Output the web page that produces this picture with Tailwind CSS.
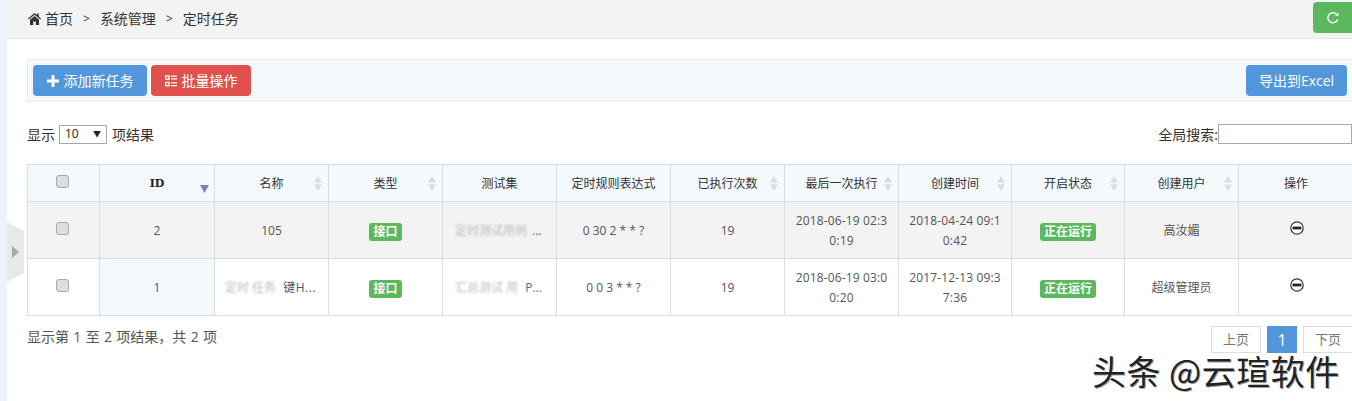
<!doctype html>
<html lang="zh-CN">
  <head>
    <meta charset="UTF-8" />
    <title>定时任务</title>
    <script src="https://cdn.jsdelivr.net/npm/@tailwindcss/browser@4"></script>
  </head>
  <body class="relative flex h-[401px] w-[1352px] overflow-hidden bg-white font-['Open_Sans','Noto_Sans_CJK_SC',sans-serif] text-[14px] text-[#444]">
    <!-- left strip and collapse tab -->
    <aside class="w-[7px] shrink-0 bg-[#eef2f9]"></aside>
    <div class="absolute left-[7px] top-[222px] h-[60px] w-[17px] bg-[#e8e8e8] [clip-path:polygon(0_0,100%_15%,100%_85%,0_100%)]">
      <span class="absolute left-[5px] top-[24px] border-y-[6px] border-l-[7px] border-y-transparent border-l-[#a9a9a9]"></span>
    </div>

    <main class="w-[1345px] shrink-0">
      <!-- breadcrumb -->
      <header class="flex h-[39px] items-start justify-between border-b border-[#e7e7e7] bg-[#f3f3f3]">
        <nav class="flex h-[37px] items-center pl-[21px] text-[#333]">
          <svg class="mr-[4px] h-[12px] w-[13px]" viewBox="0 0 13 12" fill="#333"><path d="M6.5 0 0 5.6l.8.9L6.5 1.7l5.7 4.8.8-.9-2.3-2V.6H9v1.5zM6.5 3 2 6.8V12h3.2V8.4h2.6V12H11V6.8z" /></svg>
          <span>首页</span>
          <span class="mx-[10px] text-[12px]">&gt;</span>
          <span>系统管理</span>
          <span class="mx-[10px] text-[12px]">&gt;</span>
          <span>定时任务</span>
        </nav>
        <button class="mt-[2px] flex h-[31px] w-[39px] items-center justify-center rounded-l-[4px] bg-[#5cb85c]">
          <svg class="h-[14px] w-[14px]" viewBox="0 0 14 14" fill="none" stroke="#fff" stroke-width="1.4"><path d="M11.6 8.4A5 5 0 1 1 10.4 3.2" /><path d="M12.4 1.4v3.4H9z" fill="#fff" stroke="none" /></svg>
        </button>
      </header>

      <div class="pl-[20px]">
        <!-- toolbar -->
        <div class="mt-[20px] flex h-[43px] items-center justify-between border-y border-l border-[#e8eef2] bg-[#f4f9fd] pl-[5px] pr-[5px]">
          <div class="flex gap-[4px]">
            <button class="flex h-[31px] w-[114px] items-center justify-center gap-[5px] rounded-[4px] bg-[#5296dc] text-[14px] text-white">
              <svg class="h-[12px] w-[12px]" viewBox="0 0 12 12" fill="#fff"><path d="M4.5 0h3v4.500H12v3H7.500V12h-3V7.500H0v-3h4.500z" /></svg>
              添加新任务
            </button>
            <button class="flex h-[31px] w-[100px] items-center justify-center gap-[5px] rounded-[4px] bg-[#e0504c] text-[14px] text-white">
              <svg class="h-[12px] w-[12px]" viewBox="0 0 12 12" fill="none" stroke="#fff" stroke-width="1.3"><rect x="0.7" y="0.9" width="3.4" height="3.4" /><rect x="0.7" y="7.4" width="3.4" height="3.4" /><path d="M6 1.2h6M6 3.900h6M6 7.800h6M6 10.600h6" /></svg>
              批量操作
            </button>
          </div>
          <button class="h-[31px] w-[101px] rounded-[4px] bg-[#5296dc] text-[14px] text-white">导出到Excel</button>
        </div>

        <!-- length and search -->
        <div class="mt-[22px] flex h-[20px] items-center justify-between">
          <div class="flex items-center gap-[4px] text-[#333]">
            <span>显示</span>
            <div class="flex h-[19px] w-[48px] items-center justify-between border border-[#a9a9a9] pl-[5px] pr-[5px] text-[12px] text-[#222]">
              <span>10</span>
              <span class="text-[8px]">▼</span>
            </div>
            <span class="ml-[1px]">项结果</span>
          </div>
          <div class="flex items-center text-[#333]">
            <span>全局搜索:</span>
            <div class="h-[20px] w-[134px] border border-[#a9a9a9] bg-white"></div>
          </div>
        </div>

        <!-- table -->
        <table class="mt-[20px] w-[1326px] table-fixed border-collapse text-center text-[12px] text-[#555]">
          <colgroup>
            <col class="w-[72px]" /><col class="w-[115px]" /><col class="w-[114px]" /><col class="w-[114px]" /><col class="w-[114px]" /><col class="w-[114px]" /><col class="w-[114px]" /><col class="w-[114px]" /><col class="w-[113px]" /><col class="w-[113px]" /><col class="w-[114px]" /><col class="w-[115px]" />
          </colgroup>
          <thead>
            <tr class="h-[37px] bg-[#f4f9fd] text-[12px] text-[#333]">
              <th class="border border-[#d9dde0] font-normal"><input type="checkbox" class="relative -left-[1px] mx-auto -mt-[3px] block h-[13px] w-[13px] appearance-none rounded-[3px] border border-[#a8a8a8] bg-[#dedede]" /></th>
              <th class="relative border border-[#d9dde0] pt-[2px] font-['DejaVu_Serif',serif] text-[11px] font-bold text-[#222]">ID<svg class="absolute right-[5px] top-[20px] h-[8px] w-[9px]" viewBox="0 0 9 8" fill="#7a7fc0"><path d="M0 0h9L4.500 8z" /></svg></th>
              <th class="relative border border-[#d9dde0] pt-[1px] font-normal">名称<svg class="absolute right-[5px] top-[11px] h-[15px] w-[10px]" viewBox="0 0 10 15" fill="#dcdcdc"><path d="M5 0l4 6.500H1zM5 15l4-6.500H1z" /></svg></th>
              <th class="relative border border-[#d9dde0] pt-[1px] font-normal">类型<svg class="absolute right-[5px] top-[11px] h-[15px] w-[10px]" viewBox="0 0 10 15" fill="#dcdcdc"><path d="M5 0l4 6.500H1zM5 15l4-6.500H1z" /></svg></th>
              <th class="border border-[#d9dde0] pt-[1px] font-normal">测试集</th>
              <th class="border border-[#d9dde0] pt-[1px] font-normal">定时规则表达式</th>
              <th class="relative border border-[#d9dde0] pt-[1px] font-normal">已执行次数<svg class="absolute right-[5px] top-[11px] h-[15px] w-[10px]" viewBox="0 0 10 15" fill="#dcdcdc"><path d="M5 0l4 6.500H1zM5 15l4-6.500H1z" /></svg></th>
              <th class="relative border border-[#d9dde0] pt-[1px] font-normal">最后一次执行<svg class="absolute right-[5px] top-[11px] h-[15px] w-[10px]" viewBox="0 0 10 15" fill="#dcdcdc"><path d="M5 0l4 6.500H1zM5 15l4-6.500H1z" /></svg></th>
              <th class="relative border border-[#d9dde0] pt-[1px] font-normal">创建时间<svg class="absolute right-[5px] top-[11px] h-[15px] w-[10px]" viewBox="0 0 10 15" fill="#dcdcdc"><path d="M5 0l4 6.500H1zM5 15l4-6.500H1z" /></svg></th>
              <th class="relative border border-[#d9dde0] pt-[1px] font-normal">开启状态<svg class="absolute right-[5px] top-[11px] h-[15px] w-[10px]" viewBox="0 0 10 15" fill="#dcdcdc"><path d="M5 0l4 6.500H1zM5 15l4-6.500H1z" /></svg></th>
              <th class="relative border border-[#d9dde0] pt-[1px] font-normal">创建用户<svg class="absolute right-[5px] top-[11px] h-[15px] w-[10px]" viewBox="0 0 10 15" fill="#dcdcdc"><path d="M5 0l4 6.500H1zM5 15l4-6.500H1z" /></svg></th>
              <th class="border border-[#d9dde0] pt-[1px] font-normal">操作</th>
            </tr>
          </thead>
          <tbody>
            <tr class="h-[57px] bg-[#f3f3f3]">
              <td class="border border-[#d9dde0]"><input type="checkbox" class="relative -left-[1px] mx-auto -mt-[3px] block h-[13px] w-[13px] appearance-none rounded-[3px] border border-[#a8a8a8] bg-[#dedede]" /></td>
              <td class="border border-[#d9dde0] pt-[1px]">2</td>
              <td class="border border-[#d9dde0] pt-[1px]">105</td>
              <td class="border border-[#d9dde0] pt-[3px]"><span class="inline-block h-[18px] rounded-[3px] bg-[#5cb85c] px-[4px] text-[12px] font-bold leading-[18px] text-white">接口</span></td>
              <td class="border border-[#d9dde0] pl-[12px] pt-[1px] text-left"><span class="mr-[5px] text-[#bbb] blur-[1px]">定时测试用例</span><span class="text-[#666]">...</span></td>
              <td class="border border-[#d9dde0] pt-[1px]">0 30 2 * * ?</td>
              <td class="border border-[#d9dde0] pt-[1px]">19</td>
              <td class="border border-[#d9dde0] px-[9px] pt-[2px] leading-[20px] tracking-[0.15px] break-all">2018-06-19 02:30:19</td>
              <td class="border border-[#d9dde0] px-[9px] pt-[2px] leading-[20px] tracking-[0.15px] break-all">2018-04-24 09:10:42</td>
              <td class="border border-[#d9dde0] pt-[3px]"><span class="inline-block h-[18px] rounded-[3px] bg-[#5cb85c] px-[4px] text-[12px] font-bold leading-[18px] text-white">正在运行</span></td>
              <td class="border border-[#d9dde0] pt-[1px]">高汝媚</td>
              <td class="border border-[#d9dde0]">
                <svg class="relative left-[1px] mx-auto -mt-[4px] block h-[14px] w-[14px]" viewBox="0 0 14 14"><circle cx="7" cy="7" r="6.2" fill="#fff" stroke="#333" stroke-width="1.2" /><rect x="2.6" y="5.600" width="8.800" height="2.800" fill="#222" /></svg>
              </td>
            </tr>
            <tr class="h-[57px] bg-white">
              <td class="border border-[#d9dde0]"><input type="checkbox" class="relative -left-[1px] mx-auto -mt-[3px] block h-[13px] w-[13px] appearance-none rounded-[3px] border border-[#a8a8a8] bg-[#dedede]" /></td>
              <td class="border border-[#d9dde0] bg-[#f4f9fd] pt-[1px]">1</td>
              <td class="border border-[#d9dde0] pl-[10px] pt-[1px] text-left"><span class="mr-[4px] text-[#bbb] blur-[1px]">定时 任务 </span><span class="tracking-[0.5px] text-[#555]">键H...</span></td>
              <td class="border border-[#d9dde0] pt-[3px]"><span class="inline-block h-[18px] rounded-[3px] bg-[#5cb85c] px-[4px] text-[12px] font-bold leading-[18px] text-white">接口</span></td>
              <td class="border border-[#d9dde0] pl-[12px] pt-[1px] text-left"><span class="mr-[4px] text-[#bbb] blur-[1px]">汇总测试 用</span><span class="text-[#666]"> P...</span></td>
              <td class="border border-[#d9dde0] pt-[1px]">0 0 3 * * ?</td>
              <td class="border border-[#d9dde0] pt-[1px]">19</td>
              <td class="border border-[#d9dde0] px-[9px] pt-[2px] leading-[20px] tracking-[0.15px] break-all">2018-06-19 03:00:20</td>
              <td class="border border-[#d9dde0] px-[9px] pt-[2px] leading-[20px] tracking-[0.15px] break-all">2017-12-13 09:37:36</td>
              <td class="border border-[#d9dde0] pt-[3px]"><span class="inline-block h-[18px] rounded-[3px] bg-[#5cb85c] px-[4px] text-[12px] font-bold leading-[18px] text-white">正在运行</span></td>
              <td class="border border-[#d9dde0] pt-[1px]">超级管理员</td>
              <td class="border border-[#d9dde0]">
                <svg class="relative left-[1px] mx-auto -mt-[4px] block h-[14px] w-[14px]" viewBox="0 0 14 14"><circle cx="7" cy="7" r="6.2" fill="#fff" stroke="#333" stroke-width="1.2" /><rect x="2.6" y="5.600" width="8.800" height="2.800" fill="#222" /></svg>
              </td>
            </tr>
          </tbody>
        </table>

        <!-- footer -->
        <div class="mt-[10px] flex items-start justify-between">
          <span class="text-[#555] [word-spacing:0.7px]">显示第 1 至 2 项结果，共 2 项</span>
          <div class="-mr-[1px] flex gap-[6px] text-[13px]">
            <span class="flex h-[27px] w-[50px] items-center justify-center border border-[#ddd] bg-white text-[#777]">上页</span>
            <span class="flex h-[27px] w-[30px] items-center justify-center bg-[#5296dc] text-[16px] text-white">1</span>
            <span class="flex h-[27px] w-[50px] items-center justify-center border border-[#ddd] bg-white text-[#777]">下页</span>
          </div>
        </div>
      </div>
    </main>

    <!-- watermark -->
    <div class="absolute left-[1092px] top-[354px] whitespace-nowrap font-['Noto_Sans_CJK_SC',sans-serif] text-[34px] leading-[34px] tracking-[0.5px] text-[#222] [text-shadow:-1px_-1px_0_#fff,1px_1px_0_rgba(0,0,0,0.4)]">头条 @云瑄软件</div>
  </body>
</html>
